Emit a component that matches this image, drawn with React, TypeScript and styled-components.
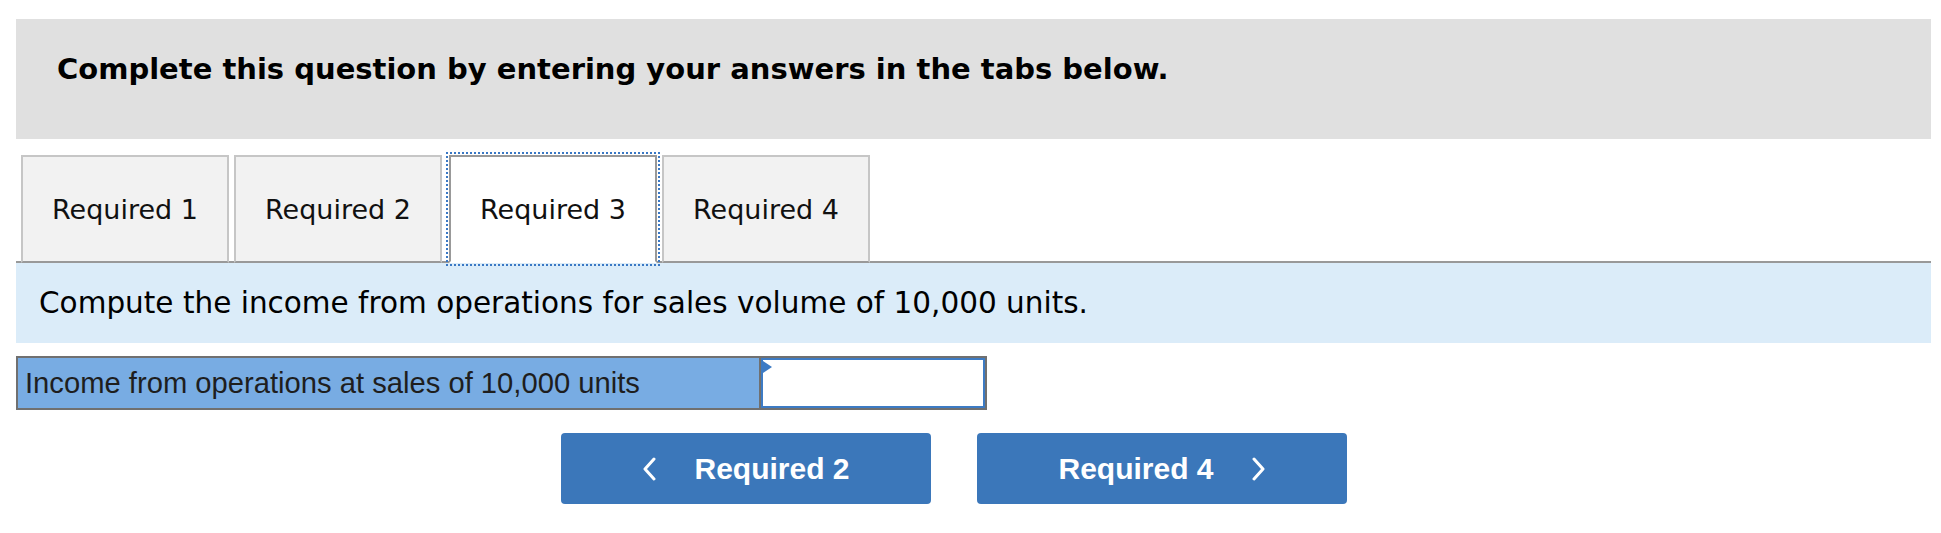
import React from "react";
import styled, { createGlobalStyle } from "styled-components";

const GlobalStyle = createGlobalStyle`
  body {
    margin: 0;
    background: #fff;
    font-family: "DejaVu Sans", Verdana, sans-serif;
    color: #000;
  }
`;

const StyledPage = styled.div`
  padding: 19px 10px 0 16px;
`;

const StyledBanner = styled.div`
  box-sizing: border-box;
  height: 120px;
  padding: 33px 0 0 41px;
  background: #e0e0e0;
  font-size: 29px;
  line-height: 34px;
  font-weight: bold;
`;

const StyledTabList = styled.div`
  display: flex;
  margin-top: 16px;
  padding-left: 5px;
  border-bottom: 2px solid #999;
`;

const StyledTab = styled.div<{ $active?: boolean }>`
  box-sizing: border-box;
  display: flex;
  align-items: center;
  justify-content: center;
  width: 208px;
  height: 108px;
  margin: ${(p) => (p.$active ? "0 5px -2px 2px" : "0 5px -2px 0")};
  font-size: 27px;
  color: #111;
  background: ${(p) => (p.$active ? "#fff" : "#f2f2f2")};
  border: 2px solid ${(p) => (p.$active ? "#999" : "#c6c6c6")};
  border-bottom: ${(p) => (p.$active ? "2px solid #fff" : "2px solid #999")};
  outline: ${(p) => (p.$active ? "2px dotted #3a78c4" : "none")};
  outline-offset: 1px;
`;

const StyledPrompt = styled.div`
  display: flex;
  align-items: center;
  height: 80px;
  padding-left: 23px;
  background: #dbecf9;
  font-size: 29.5px;
`;

const StyledIncomeRow = styled.div`
  display: flex;
  width: 971px;
  height: 54px;
  box-sizing: border-box;
  margin-top: 13px;
  border: 2px solid #707070;
`;

const StyledLabel = styled.div`
  flex: 1;
  display: flex;
  align-items: center;
  padding-left: 7px;
  background: #78ace3;
  font-family: "Liberation Sans", Arial, sans-serif;
  font-size: 29.2px;
  color: #1e1e1e;
`;

const StyledInputCell = styled.div`
  position: relative;
  box-sizing: border-box;
  width: 226px;
  border-left: 2px solid #707070;
  & > input {
    box-sizing: border-box;
    width: 100%;
    height: 100%;
    margin: 0;
    border: 2px solid #3d7bc4;
    outline: none;
    background: #fff;
    font-family: "Liberation Sans", Arial, sans-serif;
    font-size: 24px;
  }
`;

const StyledFlag = styled.span`
  position: absolute;
  top: 3px;
  left: 2px;
  width: 0;
  height: 0;
  border-top: 6px solid transparent;
  border-bottom: 6px solid transparent;
  border-left: 9px solid #3d7bc4;
`;

const StyledNav = styled.div`
  display: flex;
  gap: 46px;
  margin-top: 23px;
  padding-left: 545px;
`;

const StyledNavButton = styled.button`
  display: flex;
  align-items: center;
  justify-content: center;
  gap: 37px;
  width: 370px;
  height: 71px;
  padding: 0;
  border: none;
  border-radius: 4px;
  background: #3b77ba;
  color: #fff;
  font-family: "Liberation Sans", Arial, sans-serif;
  font-size: 30px;
  font-weight: bold;
  cursor: pointer;
`;

const Chevron = ({ dir }: { dir: "left" | "right" }) => (
  <svg width="15" height="24" viewBox="0 0 15 24">
    <polyline
      points={dir === "left" ? "12,2 3,12 12,22" : "3,2 12,12 3,22"}
      fill="none"
      stroke="#fff"
      strokeWidth="3"
      strokeLinecap="round"
      strokeLinejoin="round"
    />
  </svg>
);

const tabs = ["Required 1", "Required 2", "Required 3", "Required 4"];

const App = () => {
  return (
    <StyledPage>
      <GlobalStyle />
      <StyledBanner>
        Complete this question by entering your answers in the tabs below.
      </StyledBanner>
      <StyledTabList>
        {tabs.map((t) => (
          <StyledTab key={t} $active={t === "Required 3"}>
            {t}
          </StyledTab>
        ))}
      </StyledTabList>
      <StyledPrompt>
        Compute the income from operations for sales volume of 10,000 units.
      </StyledPrompt>
      <StyledIncomeRow>
        <StyledLabel>Income from operations at sales of 10,000 units</StyledLabel>
        <StyledInputCell>
          <input type="text" aria-label="Income from operations" />
          <StyledFlag />
        </StyledInputCell>
      </StyledIncomeRow>
      <StyledNav>
        <StyledNavButton>
          <Chevron dir="left" />
          Required 2
        </StyledNavButton>
        <StyledNavButton>
          Required 4
          <Chevron dir="right" />
        </StyledNavButton>
      </StyledNav>
    </StyledPage>
  );
};

export default App;
